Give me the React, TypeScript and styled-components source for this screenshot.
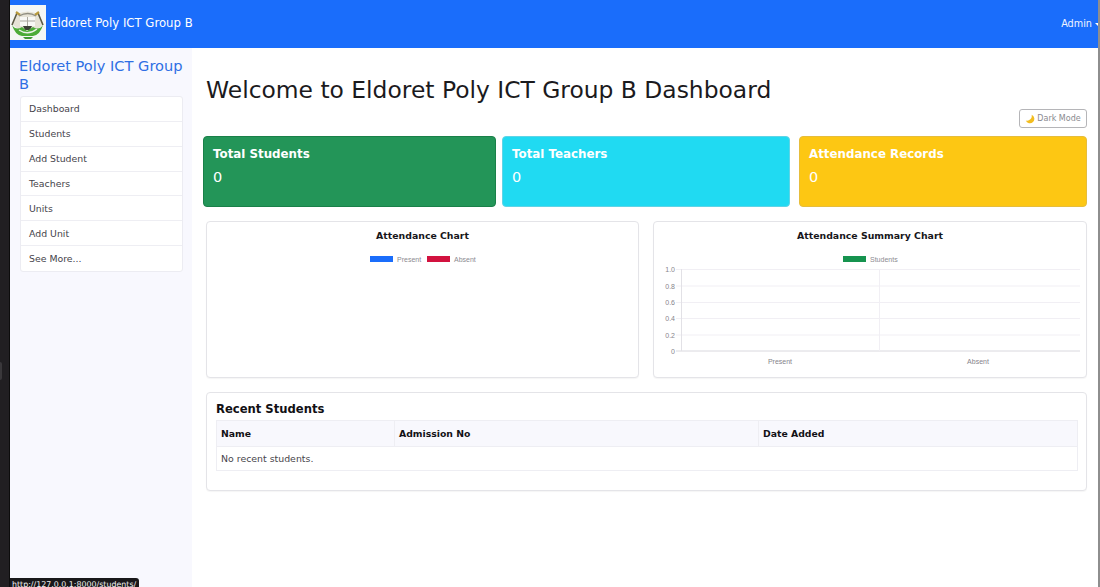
import React from "react";
import styled, { createGlobalStyle } from "styled-components";

const Global = createGlobalStyle`
  html, body { margin: 0; padding: 0; height: 100%; overflow: hidden; background: #fff; }
  body { font-family: "DejaVu Sans", sans-serif; color: #212529; }
  #root { height: 100%; }
  * { box-sizing: border-box; }
`;

const Screen = styled.div`
  display: flex;
  width: 1100px;
  height: 587px;
  position: relative;
  overflow: hidden;
`;
const Dock = styled.div`
  width: 10px;
  flex: none;
  background: #211f22;
  border-right: 1px solid #0c0c0c;
  display: flex;
  align-items: center;
`;
const DockHandle = styled.div`
  width: 2px;
  height: 18px;
  margin-top: 155px;
  border-radius: 0 3px 3px 0;
  background: #3a383b;
`;
const EdgeBar = styled.div`
  width: 2px;
  flex: none;
  background: #8e8e8e;
`;
const Window = styled.div`
  flex: 1;
  min-width: 0;
  display: flex;
  flex-direction: column;
`;
const Navbar = styled.header`
  height: 48px;
  flex: none;
  background: #1a6dfb;
  display: flex;
  align-items: flex-start;
  color: #fff;
  overflow: hidden;
`;
const LogoBox = styled.div`
  width: 36px;
  height: 35px;
  margin-top: 5px;
  background: #f4f6f4;
  flex: none;
`;
const Brand = styled.div`
  font-size: 11.7px;
  line-height: 16px;
  margin: 15px 0 0 4px;
`;
const AdminMenu = styled.div`
  margin: 16px -3px 0 auto;
  font-size: 9.7px;
  line-height: 16px;
  display: flex;
  align-items: center;
  color: #f0f4ff;
`;
const Caret = styled.span`
  width: 0;
  height: 0;
  margin-left: 3px;
  border-left: 3px solid transparent;
  border-right: 3px solid transparent;
  border-top: 3px solid #fff;
`;
const Body = styled.div`
  flex: 1;
  display: flex;
  min-height: 0;
`;
const Sidebar = styled.aside`
  width: 182px;
  flex: none;
  background: #f8f8fe;
  padding: 9px 9px 0 10px;
`;
const SideTitle = styled.div`
  font-size: 14.6px;
  line-height: 17.5px;
  color: #2f6fe4;
  margin: 0 -4px 4px -1px;
`;
const SideList = styled.nav`
  background: #fff;
  border: 1px solid #ececf2;
  border-radius: 3px;
`;
const SideItem = styled.div`
  height: 24.85px;
  padding-left: 8px;
  display: flex;
  align-items: center;
  font-size: 9.35px;
  color: #45434a;
  border-bottom: 1px solid #eeeef3;
  &:last-child { border-bottom: 0; }
`;
const Main = styled.main`
  flex: 1;
  min-width: 0;
  padding: 26px 11px 0 11px;
`;
const Title = styled.h1`
  margin: 0 0 0 3px;
  font-size: 23.4px;
  font-weight: 400;
  line-height: 32px;
  color: #1b1a1d;
`;
const ToolRow = styled.div`
  display: flex;
  justify-content: flex-end;
  margin-top: 3px;
`;
const DarkButton = styled.button`
  width: 68px;
  height: 19px;
  padding: 0;
  font: 8px "DejaVu Sans", sans-serif;
  color: #8a8a8f;
  background: #fff;
  border: 1px solid #b5b5b8;
  border-radius: 3px;
  display: flex;
  align-items: center;
  justify-content: center;
  gap: 2px;
`;
const Stats = styled.section`
  display: flex;
  margin-top: 8px;
`;
const Stat = styled.div<{ $bg: string; $edge: string; $w: number; $gap: number }>`
  width: ${(p) => p.$w}px;
  height: 71px;
  margin-right: ${(p) => p.$gap}px;
  flex: none;
  background: ${(p) => p.$bg};
  border: 1px solid ${(p) => p.$edge};
  border-radius: 4px;
  color: #fff;
  padding: 9px 9px;
`;
const StatLabel = styled.div`
  font-size: 11.85px;
  font-weight: 700;
  line-height: 16px;
`;
const StatValue = styled.div`
  font-size: 14.5px;
  line-height: 18px;
  margin-top: 6px;
`;
const Charts = styled.section`
  display: flex;
  gap: 14px;
  margin: 14px 0 0 3px;
`;
const Panel = styled.div`
  background: #fff;
  border: 1px solid #e4e4e8;
  border-radius: 4px;
  box-shadow: 0 1px 1px rgba(0, 0, 0, 0.04);
`;
const ChartPanel = styled(Panel)<{ $w: number }>`
  width: ${(p) => p.$w}px;
  height: 157px;
  flex: none;
  padding-top: 7px;
`;
const ChartTitle = styled.div`
  font-size: 9.35px;
  font-weight: 700;
  line-height: 14px;
  text-align: center;
  color: #17161a;
`;
const ChartSvg = styled.svg`
  display: block;
  width: 100%;
`;
const RecentPanel = styled(Panel)`
  margin: 14px 0 0 3px;
  height: 99px;
  padding: 9px 9px 9px 9px;
`;
const RecentTitle = styled.div`
  font-size: 11.6px;
  font-weight: 700;
  line-height: 15px;
  color: #111014;
  margin-bottom: 3px;
`;
const Table = styled.table`
  width: 861px;
  border-collapse: collapse;
  table-layout: fixed;
  font-size: 9.3px;
  border: 1px solid #eeeef3;
`;
const Th = styled.th<{ $w: number }>`
  width: ${(p) => p.$w}px;
  height: 26px;
  padding: 0 4px;
  text-align: left;
  font-weight: 700;
  background: #f8f8fd;
  color: #121115;
  border-bottom: 1px solid #eeeef3;
  border-right: 1px solid #eeeef3;
  &:last-child { border-right: 0; }
`;
const Td = styled.td`
  height: 24px;
  padding: 0 4px;
  color: #47454c;
  font-size: 9.4px;
`;
const StatusTip = styled.div`
  position: absolute;
  left: 10px;
  bottom: 0;
  width: 129px;
  height: 9px;
  overflow: hidden;
  padding: 0 0 0 2px;
  background: #19181a;
  border-radius: 0 3px 0 0;
  color: #f2f2f2;
  font-size: 7.9px;
  line-height: 13px;
  white-space: nowrap;
`;

const Logo = () => (
  <svg width="36" height="35" viewBox="0 0 36 35" aria-hidden="true">
    <path d="M7 9 L3 20 L18 31 L33 20 L28 9 Q18 4 7 9 Z" fill="#e6e3d6" />
    <path d="M7 8 L2 20 M28 8 L33 20" stroke="#5c5a44" strokeWidth="1.6" />
    <path d="M6 7 L10 10 M29 7 L25 10" stroke="#b89a3c" strokeWidth="2.2" />
    <path d="M9 11 Q18 6 26 11" fill="none" stroke="#8f8d80" strokeWidth="1.4" />
    <rect x="10" y="12" width="15" height="9" fill="#f8f8f5" />
    <path d="M10 16 H25 M17.5 12 V21" stroke="#a9a79e" strokeWidth="1" />
    <path d="M13 21 H22 L20 25 H15 Z" fill="#3b3f35" />
    <path d="M2 20 Q6 26 12 22 L17 26 L23 22 Q29 26 33 20 Q30 30 23 31 L12 31 Q5 30 2 20 Z" fill="#4cab37" />
    <path d="M9 25 Q18 31 27 24" fill="none" stroke="#eef2ea" strokeWidth="1.4" />
    <path d="M13 32 H23 L21 34 H15 Z" fill="#3f9a34" />
  </svg>
);

const Moon = () => (
  <svg width="10" height="10" viewBox="0 0 10 10" aria-hidden="true">
    <path d="M6.6 0.8 A4.4 4.4 0 1 1 0.8 6.4 A4.6 4.6 0 0 0 6.6 0.8 Z" fill="#f3bd1f" />
  </svg>
);

const Legend = ({ items, y }: { items: { x: number; w?: number; color: string; label: string }[]; y: number }) => (
  <g>
    {items.map((i) => (
      <g key={i.label}>
        <rect x={i.x} y={y} width={i.w ?? 23} height={6} fill={i.color} />
        <text x={i.x + (i.w ?? 23) + 4} y={y + 5.5} fontFamily="Liberation Sans" fontSize="7" fill="#8d8b92">
          {i.label}
        </text>
      </g>
    ))}
  </g>
);

const AttendanceChart = () => (
  <ChartSvg viewBox="0 0 431 126" height="126">
    <Legend y={13} items={[
      { x: 163, color: "#1a6dfb", label: "Present" },
      { x: 220, color: "#d2123f", label: "Absent" },
    ]} />
  </ChartSvg>
);

const ticks = [
  { label: "1.0", y: 26.5 },
  { label: "0.8", y: 43 },
  { label: "0.6", y: 59.5 },
  { label: "0.4", y: 75.5 },
  { label: "0.2", y: 92 },
  { label: "0", y: 108 },
];

const SummaryChart = () => (
  <ChartSvg viewBox="0 0 432 126" height="126">
    <Legend y={13} items={[{ x: 189, color: "#16934f", label: "Students" }]} />
    {ticks.map((t) => (
      <g key={t.label}>
        <line x1="22" x2="426" y1={t.y} y2={t.y} stroke={t.label === "0" ? "#d9d8de" : "#f1eff4"} strokeWidth="1" />
        <text x="21" y={t.y + 2.5} textAnchor="end" fontFamily="Liberation Sans" fontSize="7" fill="#86848b">
          {t.label}
        </text>
      </g>
    ))}
    <line x1="27.5" x2="27.5" y1="26" y2="108" stroke="#e2e1e6" />
    <line x1="225.5" x2="225.5" y1="26" y2="108" stroke="#f1eff4" />
    <text x="126" y="120.5" textAnchor="middle" fontFamily="Liberation Sans" fontSize="7" fill="#86848b">Present</text>
    <text x="324" y="120.5" textAnchor="middle" fontFamily="Liberation Sans" fontSize="7" fill="#86848b">Absent</text>
  </ChartSvg>
);

const navItems = ["Dashboard", "Students", "Add Student", "Teachers", "Units", "Add Unit", "See More..."];

export default function App() {
  return (
    <Screen>
      <Global />
      <Dock><DockHandle /></Dock>
      <Window>
        <Navbar>
          <LogoBox><Logo /></LogoBox>
          <Brand>Eldoret Poly ICT Group B</Brand>
          <AdminMenu>Admin<Caret /></AdminMenu>
        </Navbar>
        <Body>
          <Sidebar>
            <SideTitle>Eldoret Poly ICT Group B</SideTitle>
            <SideList>
              {navItems.map((n) => <SideItem key={n}>{n}</SideItem>)}
            </SideList>
          </Sidebar>
          <Main>
            <Title>Welcome to Eldoret Poly ICT Group B Dashboard</Title>
            <ToolRow>
              <DarkButton><Moon /> Dark Mode</DarkButton>
            </ToolRow>
            <Stats>
              <Stat $bg="#239558" $edge="#1a8049" $w={293} $gap={6}>
                <StatLabel>Total Students</StatLabel>
                <StatValue>0</StatValue>
              </Stat>
              <Stat $bg="#20daf2" $edge="#5fd4e6" $w={288} $gap={9}>
                <StatLabel>Total Teachers</StatLabel>
                <StatValue>0</StatValue>
              </Stat>
              <Stat $bg="#fdc713" $edge="#e6bd3c" $w={288} $gap={0}>
                <StatLabel>Attendance Records</StatLabel>
                <StatValue>0</StatValue>
              </Stat>
            </Stats>
            <Charts>
              <ChartPanel $w={433}>
                <ChartTitle>Attendance Chart</ChartTitle>
                <AttendanceChart />
              </ChartPanel>
              <ChartPanel $w={434}>
                <ChartTitle>Attendance Summary Chart</ChartTitle>
                <SummaryChart />
              </ChartPanel>
            </Charts>
            <RecentPanel>
              <RecentTitle>Recent Students</RecentTitle>
              <Table>
                <thead>
                  <tr>
                    <Th $w={178}>Name</Th>
                    <Th $w={364}>Admission No</Th>
                    <Th $w={319}>Date Added</Th>
                  </tr>
                </thead>
                <tbody>
                  <tr><Td colSpan={3}>No recent students.</Td></tr>
                </tbody>
              </Table>
            </RecentPanel>
          </Main>
        </Body>
      </Window>
      <EdgeBar />
      <StatusTip>http://127.0.0.1:8000/students/</StatusTip>
    </Screen>
  );
}
